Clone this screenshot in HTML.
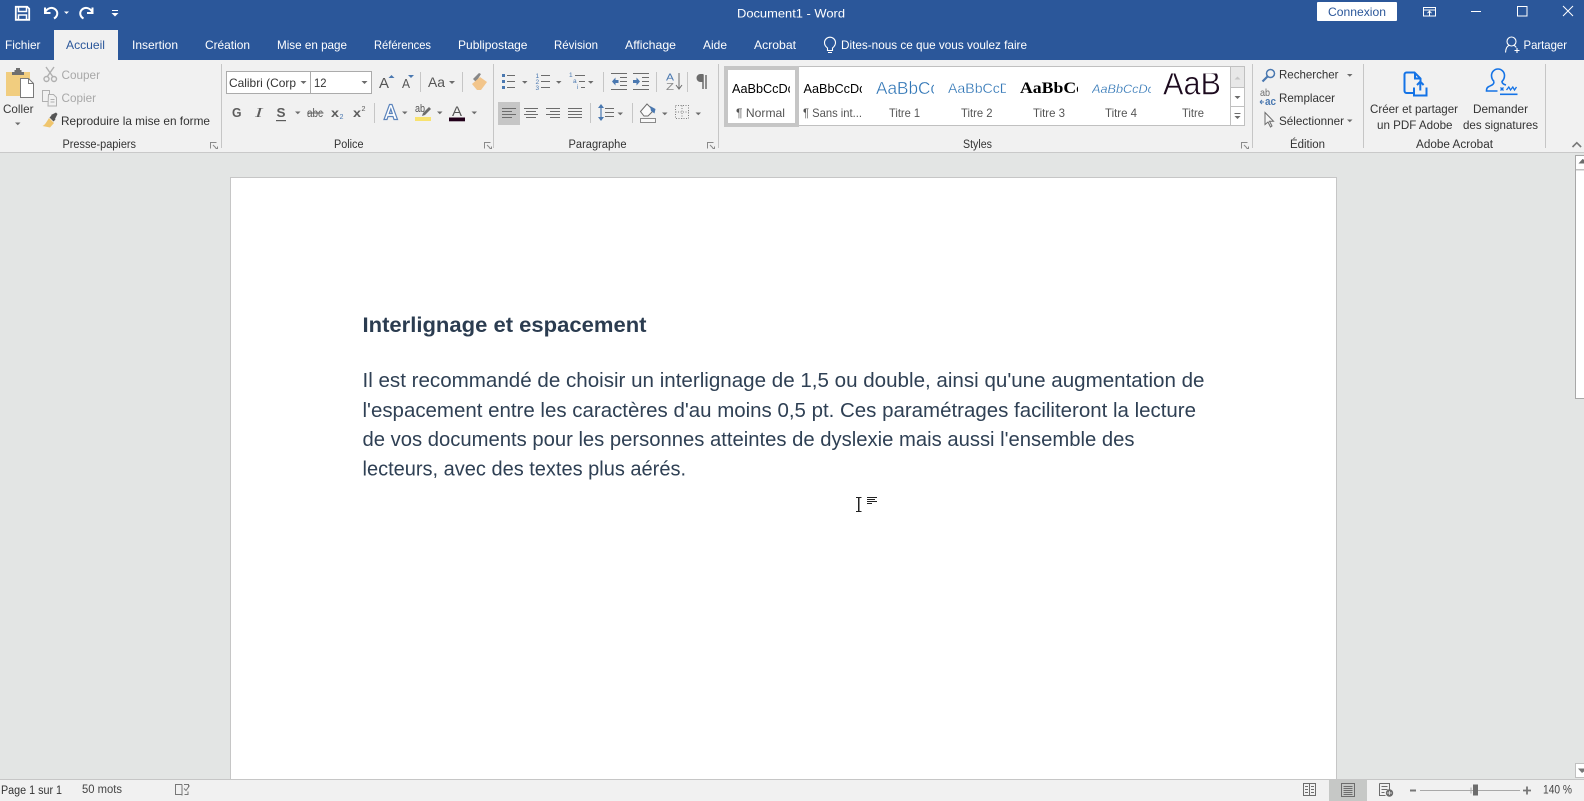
<!DOCTYPE html>
<html lang="fr"><head><meta charset="utf-8"><title>Document1 - Word</title>
<style>
html,body{margin:0;padding:0;background:#e3e5e4;overflow:hidden}
svg{display:block;width:1584px;height:801px}
text{font-family:"Liberation Sans",sans-serif;font-size:12px;fill:#3a3a3a}
.w{fill:#fff}
.d{fill:#a8a8a8}
.g{font-size:11.5px;fill:#333}
.b{font-size:20px;fill:#2f4054}
.h{font-size:21.5px;font-weight:bold;fill:#2b3c50}
.ab{fill:none;stroke:#1473e6;stroke-width:2}
.sep{stroke:#c6c6c6;stroke-width:1}
.ar{fill:#6c6c6c}
</style></head><body>
<svg xmlns="http://www.w3.org/2000/svg" viewBox="0 0 1584 801" width="1584" height="801">
<defs>
<clipPath id="c1"><rect x="728" y="70" width="62" height="30"/></clipPath>
<clipPath id="c2"><rect x="803" y="70" width="59" height="30"/></clipPath>
<clipPath id="c3"><rect x="875" y="70" width="59" height="30"/></clipPath>
<clipPath id="c4"><rect x="947" y="70" width="59" height="30"/></clipPath>
<clipPath id="c5"><rect x="1019" y="70" width="59" height="30"/></clipPath>
<clipPath id="c6"><rect x="1092" y="70" width="59" height="30"/></clipPath>
<clipPath id="c7"><rect x="1160" y="73.500" width="65" height="28"/></clipPath>
</defs>

<rect width="1584" height="801" fill="#e3e5e4"/>
<rect width="1584" height="60" fill="#2b579a"/>
<rect y="60" width="1584" height="92" fill="#f1f1f1"/>
<rect y="152" width="1584" height="1" fill="#c9c9c9"/>

<!-- Quick access -->
<g fill="none" stroke="#fff" stroke-width="1.6">
<path d="M15.800 6.800H27.200L29.200 8.800V19.800H15.800Z" stroke-width="1.800"/>
<path d="M18.500 7V11.500H26.500V7" stroke-width="1.500"/>
<path d="M18.500 19.500V15H26.500V19.500" stroke-width="1.500"/>
<path d="M45 12.500C47 8 52 6.500 55.500 9.500C58.500 12.500 57.500 16.500 54 18.500" stroke-width="2"/>
<path d="M45 7.500V13H50.500" stroke-width="2"/>
<path d="M92.500 12.500C90.500 8 85.500 6.500 82 9.500C79 12.500 80 16.500 83.500 18.500" stroke-width="2"/>
<path d="M92.500 7.500V13H87" stroke-width="2"/>
</g>
<path d="M64 11.500h5l-2.500 2.500z" fill="#fff"/>
<rect x="112" y="10" width="6" height="1" fill="#fff"/>
<path d="M111.500 13h7l-3.500 3.500z" fill="#fff"/>

<!-- Title -->
<text class="w" x="737" y="17.500" textLength="108" lengthAdjust="spacingAndGlyphs">Document1  -  Word</text>
<rect x="1317" y="2" width="80" height="19" rx="1" fill="#fff"/>
<text x="1328" y="16" textLength="58" lengthAdjust="spacingAndGlyphs" style="fill:#2b579a">Connexion</text>

<!-- Window controls -->
<g fill="none" stroke="#fff" stroke-width="1">
<rect x="1423.500" y="7.500" width="12" height="8.500"/>
<path d="M1423.500 10h12M1429.500 15.500V11.500M1427.500 13.200l2-2 2 2"/>
<path d="M1471 11.500h10"/>
<rect x="1517.500" y="6.500" width="9.500" height="9.500"/>
<path d="M1563 6l10 10M1573 6l-10 10"/>
<circle cx="1511.500" cy="41.500" r="4.500" stroke-width="1.100"/>
<path d="M1505.500 52.500c.3-4.500 2-6.500 3.500-7M1514 45.500c1 .3 1.700 1 2.300 2M1514.500 50.500h5M1517 48v5" stroke-width="1.100"/>
<path d="M827.500 50.500v-2.500c-1.500-1.200-3-2.800-3-5.300a5.500 5.500 0 0 1 11 0c0 2.500-1.500 4-3 5.300v2.500zM828 52.500h4" stroke-width="1.100"/>
</g>

<!-- Tabs -->
<rect x="54" y="30" width="64" height="30" fill="#f1f1f1"/>
<g>
<text class="w" x="5" y="49" textLength="35.500" lengthAdjust="spacingAndGlyphs">Fichier</text>
<text x="66" y="49" textLength="39" lengthAdjust="spacingAndGlyphs" style="fill:#2b579a">Accueil</text>
<text class="w" x="132" y="49" textLength="46" lengthAdjust="spacingAndGlyphs">Insertion</text>
<text class="w" x="205" y="49" textLength="45" lengthAdjust="spacingAndGlyphs">Création</text>
<text class="w" x="277" y="49" textLength="70" lengthAdjust="spacingAndGlyphs">Mise en page</text>
<text class="w" x="374" y="49" textLength="57" lengthAdjust="spacingAndGlyphs">Références</text>
<text class="w" x="458" y="49" textLength="69.500" lengthAdjust="spacingAndGlyphs">Publipostage</text>
<text class="w" x="554" y="49" textLength="44" lengthAdjust="spacingAndGlyphs">Révision</text>
<text class="w" x="625" y="49" textLength="51" lengthAdjust="spacingAndGlyphs">Affichage</text>
<text class="w" x="703" y="49" textLength="24" lengthAdjust="spacingAndGlyphs">Aide</text>
<text class="w" x="754" y="49" textLength="42" lengthAdjust="spacingAndGlyphs">Acrobat</text>
<text class="w" x="841" y="49" textLength="186" lengthAdjust="spacingAndGlyphs">Dites-nous ce que vous voulez faire</text>
<text class="w" x="1523.500" y="49" textLength="43.500" lengthAdjust="spacingAndGlyphs">Partager</text>
</g>

<!-- Separators -->
<g class="sep">
<path d="M221.500 64V148M493.500 64V148M718.500 64V148M1252.500 64V148M1363.500 64V148M1545.500 64V148"/>
<path d="M420.500 72V92M462.500 72V92M374.500 103V123M603.500 72V92M656.500 72V92M687.500 72V92M590.500 103V123M632.500 103V123"/>
</g>

<!-- Clipboard group -->
<rect x="6" y="72" width="24" height="24" fill="#f1cd7f"/>
<path d="M12 72h2.500v-2h1.500v-2h4v2h1.500v2H24v3H12z" fill="#6f6f6f"/>
<path d="M20.500 78.500h8l5 5v14h-13z" fill="#fff" stroke="#7a7a7a"/>
<path d="M28.500 78.500v5h5" fill="none" stroke="#7a7a7a"/>
<text x="3" y="113" textLength="30.500" lengthAdjust="spacingAndGlyphs">Coller</text>
<path d="M15 122.500h5.500l-2.700 2.700z" class="ar"/>
<g fill="none" stroke="#b0b0b0" stroke-width="1.400">
<path d="M46 67l7 10M54 67l-7 10"/>
<circle cx="46.500" cy="79" r="2.500"/><circle cx="54" cy="79" r="2.500"/>
<rect x="42.500" y="90.500" width="7" height="11" stroke-width="1"/>
<path d="M48.500 94.500h5l3 3v8.500h-8.500z" fill="#f1f1f1" stroke-width="1"/>
<path d="M50.500 99.500h4M50.500 102h4" stroke-width="1"/>
</g>
<text class="d" x="61.500" y="79" textLength="38.500" lengthAdjust="spacingAndGlyphs">Couper</text>
<text class="d" x="61.500" y="102" textLength="34.500" lengthAdjust="spacingAndGlyphs">Copier</text>
<path d="M49 118l5 5-4 4.500-7.500-1.500c2.500-1 4-4 6.500-8z" fill="#efc56d"/>
<path d="M49.500 117.500l2-2 4 4-2 2zM51 115l5-2.500 1.500 1.500-2.500 5z" fill="#555"/>
<text x="61" y="125" textLength="149" lengthAdjust="spacingAndGlyphs" style="fill:#333">Reproduire la mise en forme</text>
<text class="g" x="62.500" y="148" textLength="73.500" lengthAdjust="spacingAndGlyphs">Presse-papiers</text>

<!-- Launchers -->
<g fill="none" stroke="#8a8a8a" stroke-width="1">
<path d="M216.500 142.500h-6v6M217.500 146.500v2h-2M213 145l3 3"/>
<path d="M490.500 142.500h-6v6M491.500 146.500v2h-2M487 145l3 3"/>
<path d="M713.500 142.500h-6v6M714.500 146.500v2h-2M710 145l3 3"/>
<path d="M1247.500 142.500h-6v6M1248.500 146.500v2h-2M1244 145l3 3"/>
</g>

<!-- Police -->
<rect x="226.500" y="71.500" width="145" height="22" fill="#fff" stroke="#ababab"/>
<path d="M310.500 71.500V93.500" stroke="#ababab"/>
<text x="229" y="87" textLength="67" lengthAdjust="spacingAndGlyphs" style="fill:#333">Calibri (Corp</text>
<text x="314" y="87" textLength="12.500" lengthAdjust="spacingAndGlyphs" style="fill:#333">12</text>
<path d="M300.500 81h6l-3 3zM361.500 81h6l-3 3z" class="ar"/>
<text x="379" y="88" style="font-size:15px;fill:#555" textLength="10" lengthAdjust="spacingAndGlyphs">A</text>
<path d="M388.500 78h6l-3-3z" fill="#4a78b0"/>
<text x="402" y="88" style="font-size:12.500px;fill:#555" textLength="8" lengthAdjust="spacingAndGlyphs">A</text>
<path d="M408 75h6l-3 3z" fill="#4a78b0"/>
<text x="428" y="87" style="font-size:14px;fill:#555" textLength="17" lengthAdjust="spacingAndGlyphs">Aa</text>
<path d="M449 81h6l-3 3z" class="ar"/>
<path d="M473 79l6-6 2 1-5 8z" fill="#888"/>
<path d="M477 90l-5-6 8-7 7 5-6 8z" fill="#f2c58b"/>

<text x="232" y="117" style="font-size:12.500px;font-weight:bold;fill:#5c5c5c" textLength="9.500" lengthAdjust="spacingAndGlyphs">G</text>
<text x="255" y="117" style="font-size:14px;font-style:italic;fill:#5c5c5c;font-family:'Liberation Serif',serif" textLength="7.500" lengthAdjust="spacingAndGlyphs">I</text>
<text x="276.500" y="117" style="font-size:12.500px;font-weight:bold;fill:#5c5c5c" textLength="9" lengthAdjust="spacingAndGlyphs">S</text>
<rect x="276" y="120" width="10" height="1.200" fill="#5c5c5c"/>
<text x="307" y="117" style="font-size:11.500px;fill:#5c5c5c" textLength="16" lengthAdjust="spacingAndGlyphs">abc</text>
<rect x="307" y="112.500" width="16.500" height="1" fill="#5c5c5c"/>
<text x="331" y="117" style="font-size:12px;font-weight:bold;fill:#5c5c5c" textLength="8" lengthAdjust="spacingAndGlyphs">x</text>
<text x="339.500" y="119" style="font-size:7px;fill:#4a78b0" textLength="4" lengthAdjust="spacingAndGlyphs">2</text>
<text x="353" y="117" style="font-size:12px;font-weight:bold;fill:#5c5c5c" textLength="8" lengthAdjust="spacingAndGlyphs">x</text>
<text x="361.500" y="111" style="font-size:7px;fill:#5c5c5c" textLength="4" lengthAdjust="spacingAndGlyphs">2</text>
<path d="M295 111.500h5.500l-2.700 2.700zM402 111.500h5.500l-2.700 2.700zM437 111.500h5.500l-2.700 2.700zM471.500 111.500h5.500l-2.700 2.700z" class="ar"/>
<path d="M384 119.500L389.500 104.500h2.500L397.500 119.500h-3.500l-1-3h-5l-1 3z M389.300 113.500h3L390.800 109z" fill="#fff" stroke="#5b84bc" stroke-width="1.200"/>
<text x="415" y="112" style="font-size:11px;fill:#555" textLength="10" lengthAdjust="spacingAndGlyphs">ab</text>
<path d="M423 113l6-6 2 2-6 6-3 1z" fill="#6c6c6c"/>
<rect x="415" y="117" width="16" height="4" fill="#f8e26f"/>
<text x="452" y="116" style="font-size:13.500px;fill:#555" textLength="10" lengthAdjust="spacingAndGlyphs">A</text>
<rect x="449" y="117.500" width="16" height="3.800" fill="#22001a"/>
<text class="g" x="334" y="148" textLength="29.500" lengthAdjust="spacingAndGlyphs">Police</text>

<!-- Paragraph -->
<g fill="#4a78b0">
<rect x="502" y="74" width="3" height="3"/><rect x="502" y="80" width="3" height="3"/><rect x="502" y="86" width="3" height="3"/>
<text x="535.500" y="78" style="font-size:6.500px;fill:#4a78b0">1</text><text x="535.500" y="84" style="font-size:6.500px;fill:#4a78b0">2</text><text x="535.500" y="90" style="font-size:6.500px;fill:#4a78b0">3</text>
<text x="569" y="77" style="font-size:6.500px;fill:#4a78b0">1</text><text x="573" y="83" style="font-size:6.500px;fill:#4a78b0">a</text><text x="577" y="89" style="font-size:6.500px;fill:#4a78b0">i</text>
</g>
<path d="M507 75.500h8M507 81.500h8M507 87.500h8M541 75.500h9M541 81.500h9M541 87.500h9M575 75.500h10M579 81.500h6M581 87.500h4M611 73.500h16M620 77.500h7M620 81.500h7M620 85.500h7M611 89.500h16M633 73.500h16M633 89.500h16M642 77.500h7M642 81.500h7M642 85.500h7" stroke="#6c6c6c" stroke-width="1" fill="none"/>
<path d="M618.500 80h-3v-2.500l-3.500 4 3.500 4V83h3zM633 80h3.500v-2.500l3.500 4-3.500 4V83H633z" fill="#4a78b0"/>
<path d="M522 81h5.500l-2.700 2.700zM556 81h5.500l-2.700 2.700zM588 81h5.500l-2.700 2.700zM617.500 112.500h5.500l-2.700 2.700zM662 112.500h5.500l-2.700 2.700zM695.500 112.500h5.500l-2.700 2.700z" class="ar"/>
<text x="666" y="80.500" style="font-size:10px;fill:#4a78b0" textLength="8" lengthAdjust="spacingAndGlyphs">A</text>
<text x="666" y="90" style="font-size:10px;fill:#8a8a8a" textLength="8" lengthAdjust="spacingAndGlyphs">Z</text>
<path d="M679 73v15M676 85l3 4 3-4" stroke="#6c6c6c" fill="none"/>
<path d="M706 75v14M703 75v14" stroke="#6c6c6c" stroke-width="1.500" fill="none"/>
<path d="M708 74h-7.500a4 4 0 0 0 0 8h3v-8z" fill="#6c6c6c"/>

<rect x="498" y="102" width="22" height="23" fill="#c6c6c6"/>
<path d="M502 108.500h14M502 111.500h10M502 114.500h14M502 117.500h10M524 108.500h14M526 111.500h10M524 114.500h14M526 117.500h10M546 108.500h14M550 111.500h10M546 114.500h14M550 117.500h10M568 108.500h14M568 111.500h14M568 114.500h14M568 117.500h14M605 108.500h9M605 112.500h9M605 116.500h9" stroke="#6c6c6c" stroke-width="1" fill="none"/>
<path d="M601 105v15" stroke="#4a78b0" stroke-width="1.200"/>
<path d="M598 108l3-4 3 4zM598 117l3 4 3-4z" fill="#4a78b0"/>
<path d="M640.500 111.500l6.500-7.500 6.500 6.500-5.500 5.500h-4z" fill="#fafafa" stroke="#6c6c6c"/>
<path d="M650 106l5.500 3-1 4.500-3.500-2.500z" fill="#4a78b0"/>
<rect x="640.500" y="118.500" width="15" height="4" fill="#f8f8f8" stroke="#8a8a8a"/>
<path d="M675.500 105.500h13v13h-13zM682 105.500v13M675.500 112h13" fill="none" stroke="#808080" stroke-dasharray="1 1.500"/>
<text class="g" x="568.500" y="148" textLength="58" lengthAdjust="spacingAndGlyphs">Paragraphe</text>

<!-- Styles -->
<rect x="724.500" y="66.500" width="520" height="59" fill="#fff" stroke="#c0c0c0"/>
<rect x="726" y="68" width="71" height="57" fill="#fff" stroke="#c6c6c6" stroke-width="4"/>
<text clip-path="url(#c1)" x="732" y="93" style="font-size:12.500px;fill:#000" textLength="62" lengthAdjust="spacingAndGlyphs">AaBbCcDc</text>
<text x="736" y="117" textLength="49" lengthAdjust="spacingAndGlyphs" style="fill:#555">¶ Normal</text>
<text clip-path="url(#c2)" x="803.500" y="93" style="font-size:12.500px;fill:#000" textLength="62" lengthAdjust="spacingAndGlyphs">AaBbCcDc</text>
<text x="803" y="117" textLength="59" lengthAdjust="spacingAndGlyphs" style="fill:#555">¶ Sans int...</text>
<text clip-path="url(#c3)" x="876" y="94" style="font-size:17.500px;fill:#2e74b5;stroke:#fff;stroke-width:.35" textLength="63" lengthAdjust="spacingAndGlyphs">AaBbCc</text>
<text x="889" y="117" textLength="31" lengthAdjust="spacingAndGlyphs" style="fill:#555">Titre 1</text>
<text clip-path="url(#c4)" x="948" y="93" style="font-size:14px;fill:#2e74b5;stroke:#fff;stroke-width:.25" textLength="62" lengthAdjust="spacingAndGlyphs">AaBbCcD</text>
<text x="961" y="117" textLength="31.500" lengthAdjust="spacingAndGlyphs" style="fill:#555">Titre 2</text>
<text clip-path="url(#c5)" x="1020" y="93" style="font-size:16px;font-weight:bold;fill:#000;font-family:'Liberation Serif',serif" textLength="64" lengthAdjust="spacingAndGlyphs">AaBbCc</text>
<text x="1033" y="117" textLength="32" lengthAdjust="spacingAndGlyphs" style="fill:#555">Titre 3</text>
<text clip-path="url(#c6)" x="1092" y="93" style="font-size:12px;font-style:italic;fill:#2e74b5;stroke:#fff;stroke-width:.2" textLength="62" lengthAdjust="spacingAndGlyphs">AaBbCcDc</text>
<text x="1105" y="117" textLength="32" lengthAdjust="spacingAndGlyphs" style="fill:#555">Titre 4</text>
<text clip-path="url(#c7)" x="1163" y="94.500" style="font-size:33px;fill:#1c0a1e;stroke:#fff;stroke-width:.6" textLength="58" lengthAdjust="spacingAndGlyphs">AaB</text>
<text x="1182" y="117" textLength="22" lengthAdjust="spacingAndGlyphs" style="fill:#555">Titre</text>
<rect x="1230.500" y="66.500" width="14" height="21" fill="#e8e8e8" stroke="#c0c0c0"/>
<rect x="1230.500" y="87.500" width="14" height="19" fill="#fff" stroke="#c0c0c0"/>
<rect x="1230.500" y="106.500" width="14" height="19" fill="#fff" stroke="#c0c0c0"/>
<path d="M1234.500 79.500h6l-3-3z" fill="#c6c6c6"/>
<path d="M1234.500 96h6l-3 3zM1234.500 116h6l-3 3z" class="ar"/>
<path d="M1234.500 113.500h6" stroke="#6c6c6c"/>
<text class="g" x="963" y="148" textLength="29" lengthAdjust="spacingAndGlyphs">Styles</text>

<!-- Edition -->
<g fill="none" stroke="#4a78b0" stroke-width="1.500">
<circle cx="1270.500" cy="73.500" r="4"/><path d="M1267.500 76.500l-5 5" stroke-width="2.200"/>
</g>
<text x="1279" y="78.500" textLength="59.500" lengthAdjust="spacingAndGlyphs" style="fill:#333">Rechercher</text>
<path d="M1347 74h5.500l-2.700 2.700z" class="ar"/>
<text x="1260" y="96" style="font-size:10.500px;fill:#6c6c6c" textLength="10" lengthAdjust="spacingAndGlyphs">ab</text>
<text x="1265" y="105" style="font-size:11px;font-weight:bold;fill:#4a78b0" textLength="11" lengthAdjust="spacingAndGlyphs">ac</text>
<path d="M1260 102h4M1260 102l2-2M1260 102l2 2" stroke="#4a78b0" fill="none"/>
<text x="1279" y="102" textLength="56" lengthAdjust="spacingAndGlyphs" style="fill:#333">Remplacer</text>
<path d="M1265 112.500v12l3-2.500 2.500 5 1.500-1-2.500-4.800h4z" fill="#f5f5f5" stroke="#6c6c6c"/>
<text x="1279" y="125" textLength="65" lengthAdjust="spacingAndGlyphs" style="fill:#333">Sélectionner</text>
<path d="M1347 119.500h5.500l-2.700 2.700z" class="ar"/>
<text class="g" x="1290" y="148" textLength="35" lengthAdjust="spacingAndGlyphs">Édition</text>

<!-- Acrobat -->
<path d="M1413 93h-6.500a2 2 0 0 1-2-2V74.500a2 2 0 0 1 2-2h8l6 6v3.500M1415 73v5.500h6" class="ab"/>
<path d="M1414 87.500v8h12.500v-8M1420.300 90.500v-8.500M1417 85l3.300-3.300 3.300 3.300" class="ab"/>
<path d="M1494 81.500c-2-2-2.500-4-2.500-6a6.500 6.500 0 0 1 13 0c0 2-.5 4-2.500 6 0 2 2 3 4 3.500M1494 81.500c0 3-2 3.500-5 5-2 1-2.500 2-2.500 4.500h11" fill="none" stroke="#1473e6" stroke-width="1.600"/>
<path d="M1500.500 87.500l3 3M1503.500 87.500l-3 3" stroke="#1473e6" stroke-width="1.300" fill="none"/>
<path d="M1506.500 90l2.300-3 1.700 3 2.300-3 1.700 3 2-3" stroke="#1473e6" stroke-width="1.300" fill="none"/>
<rect x="1500" y="93.500" width="17.500" height="1.600" fill="#1473e6"/>
<text x="1370" y="113" textLength="88" lengthAdjust="spacingAndGlyphs" style="fill:#333">Créer et partager</text>
<text x="1377" y="129" textLength="75.500" lengthAdjust="spacingAndGlyphs" style="fill:#333">un PDF Adobe</text>
<text x="1473" y="113" textLength="55" lengthAdjust="spacingAndGlyphs" style="fill:#333">Demander</text>
<text x="1463" y="129" textLength="75" lengthAdjust="spacingAndGlyphs" style="fill:#333">des signatures</text>
<text class="g" x="1416" y="148" textLength="77" lengthAdjust="spacingAndGlyphs">Adobe Acrobat</text>
<path d="M1572.500 147l4.300-4.300 4.300 4.300" fill="none" stroke="#777" stroke-width="1.600"/>

<!-- Page -->
<rect x="230.500" y="177.500" width="1106" height="612" fill="#fff" stroke="#c6c6c6"/>
<text class="h" x="362.500" y="332" textLength="284" lengthAdjust="spacingAndGlyphs">Interlignage et espacement</text>
<text class="b" x="362.500" y="387" textLength="842" lengthAdjust="spacingAndGlyphs">Il est recommandé de choisir un interlignage de 1,5 ou double, ainsi qu'une augmentation de</text>
<text class="b" x="362.500" y="417" textLength="833.500" lengthAdjust="spacingAndGlyphs">l'espacement entre les caractères d'au moins 0,5 pt. Ces paramétrages faciliteront la lecture</text>
<text class="b" x="362.500" y="446" textLength="772" lengthAdjust="spacingAndGlyphs">de vos documents pour les personnes atteintes de dyslexie mais aussi l'ensemble des</text>
<text class="b" x="362.500" y="475.500" textLength="323.500" lengthAdjust="spacingAndGlyphs">lecteurs, avec des textes plus aérés.</text>
<path d="M856 497.500h2.500v14h-2.500M861.500 497.500h-2.500v14h2.500" fill="none" stroke="#222" stroke-width="1"/>
<path d="M867 497.500h10M867 499.500h8M867 501.500h10M867 503.500h5" stroke="#222" stroke-width="1"/>

<!-- Scrollbar -->
<rect x="1575" y="155" width="9" height="624" fill="#e3e5e4"/>
<rect x="1575.500" y="155.500" width="9" height="243" fill="#fff" stroke="#a8a8a8"/>
<rect x="1576" y="169" width="8" height="1.500" fill="#c0c0c0"/>
<path d="M1578.500 163.500h6v-3.500l-2-1z" fill="#6c6c6c"/>
<rect x="1575.500" y="763.500" width="9" height="14" fill="#fff" stroke="#c0c0c0"/>
<path d="M1578 768.500h6v3l-2 1.500z" fill="#777"/>

<!-- Status -->
<rect y="779" width="1584" height="22" fill="#f1f1f1"/>
<rect y="779" width="1584" height="1" fill="#c6c6c6"/>
<text x="1" y="794" style="font-size:11.500px;fill:#333" textLength="61" lengthAdjust="spacingAndGlyphs">Page 1 sur 1</text>
<text x="82" y="793" style="font-size:11.500px;fill:#444" textLength="40" lengthAdjust="spacingAndGlyphs">50 mots</text>
<path d="M182 784.500h-6.500v10h6.500M182 784.500v11" fill="none" stroke="#777"/>
<path d="M184 784.500h4.500v3M184.500 794.500h3.500v-3M184 788.500l2 2 3.500-5" fill="none" stroke="#777"/>
<rect x="1329" y="780" width="38" height="21" fill="#c6c8c6"/>
<g fill="none" stroke="#6c6c6c">
<path d="M1303.500 783.500h6v12h-6zM1309.500 783.500h6v12h-6zM1305 786.500h3M1305 789.500h3M1305 792.500h3M1311 786.500h3M1311 789.500h3M1311 792.500h3"/>
<path d="M1341.500 783.500h13v13h-13zM1343.500 786.500h9M1343.500 788.500h9M1343.500 790.500h9M1343.500 792.500h9M1343.500 794.500h9"/>
<path d="M1379.500 783.500h10v9M1379.500 783.500v12h6M1381.500 786.500h6M1381.500 789.500h6M1381.500 792.500h3"/>
</g>
<circle cx="1389.500" cy="793" r="3.700" fill="#6c6c6c"/>
<path d="M1387 793h5M1389.500 791v4" stroke="#f1f1f1" stroke-width=".7"/>
<rect x="1410" y="789.500" width="6" height="2" fill="#777"/>
<rect x="1420" y="790" width="100" height="1" fill="#a8a8a8"/>
<rect x="1470.500" y="787.500" width="1" height="6" fill="#a8a8a8"/>
<rect x="1473" y="784.500" width="5" height="11" fill="#6c6c6c"/>
<path d="M1523 790.500h8M1527 786.500v8" stroke="#777" stroke-width="1.800"/>
<text x="1543" y="793.500" style="font-size:11.500px;fill:#444" textLength="29" lengthAdjust="spacingAndGlyphs">140 %</text>
</svg>
</body></html>
